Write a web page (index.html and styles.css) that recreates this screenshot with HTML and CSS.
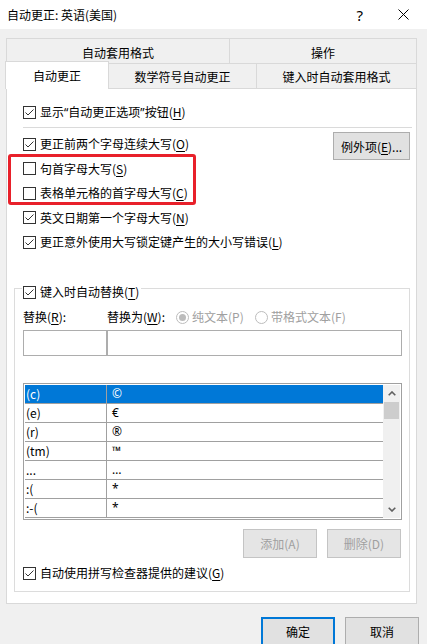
FILE: index.html
```html
<!DOCTYPE html>
<html lang="zh-CN">
  <head>
    <meta charset="UTF-8" />
    <title>自动更正: 英语(美国)</title>
    <link rel="stylesheet" href="styles.css">
  </head>
  <body>
    <svg class="defs" width="0" height="0">
      <symbol id="cb-on" viewBox="0 0 13 13">
        <rect x="0.5" y="0.5" width="12" height="12" fill="#fff" stroke="#333" />
        <polyline points="2.5,6.5 5,9 10.5,3.5" fill="none" stroke="#333" stroke-width="1" />
      </symbol>
      <symbol id="cb-off" viewBox="0 0 13 13">
        <rect x="0.5" y="0.5" width="12" height="12" fill="#fff" stroke="#333" />
      </symbol>
      <symbol id="rb-on" viewBox="0 0 13 13">
        <circle cx="6.5" cy="6.5" r="6" fill="#fff" stroke="#bcbcbc" />
        <circle cx="6.5" cy="6.5" r="3.5" fill="#bcbcbc" />
      </symbol>
      <symbol id="rb-off" viewBox="0 0 13 13">
        <circle cx="6.5" cy="6.5" r="6" fill="#fff" stroke="#bcbcbc" />
      </symbol>
    </svg>

    <div class="dialog">
      <div class="titlebar">
        <div class="title">自动更正: 英语(美国)</div>
        <span class="help">?</span>
        <svg class="close" viewBox="0 0 11 11">
          <path d="M0.5 0.5 L10.5 10.5 M10.5 0.5 L0.5 10.5" stroke="#000" stroke-width="1" />
        </svg>
      </div>

      <div class="tabs">
        <div class="tab-row top">
          <div class="tab t-format">自动套用格式</div>
          <div class="tab t-action">操作</div>
        </div>
        <div class="tab-row">
          <div class="tab active">自动更正</div>
          <div class="tab t-math">数学符号自动更正</div>
          <div class="tab t-type">键入时自动套用格式</div>
        </div>
      </div>

      <div class="panel">
        <div class="opt first">
          <svg class="cb"><use href="#cb-on" /></svg>
          <span>显示<span class="q">“</span>自动更正选项<span class="q">”</span>按钮(<u>H</u>)</span>
        </div>
        <div class="sep"></div>
        <div class="opt gap">
          <svg class="cb"><use href="#cb-on" /></svg>
          <span>更正前两个字母连续大写(<u>O</u>)</span>
          <button class="btn exc">例外项(<u>E</u>)...</button>
        </div>
        <div class="opt">
          <svg class="cb"><use href="#cb-off" /></svg>
          <span>句首字母大写(<u>S</u>)</span>
        </div>
        <div class="opt">
          <svg class="cb"><use href="#cb-off" /></svg>
          <span>表格单元格的首字母大写(<u>C</u>)</span>
        </div>
        <div class="opt">
          <svg class="cb"><use href="#cb-on" /></svg>
          <span>英文日期第一个字母大写(<u>N</u>)</span>
        </div>
        <div class="opt">
          <svg class="cb"><use href="#cb-on" /></svg>
          <span>更正意外使用大写锁定键产生的大小写错误(<u>L</u>)</span>
        </div>

        <div class="group">
          <div class="legend">
            <svg class="cb"><use href="#cb-on" /></svg>
            <span>键入时自动替换(<u>T</u>)</span>
          </div>
          <div class="labels">
            <span class="lbl-from">替换(<u>R</u>):</span>
            <span class="lbl-to">替换为(<u>W</u>):</span>
            <span class="radio first">
              <svg class="rb"><use href="#rb-on" /></svg>纯文本(P)
            </span>
            <span class="radio">
              <svg class="rb"><use href="#rb-off" /></svg>带格式文本(F)
            </span>
          </div>
          <div class="inputs">
            <div class="input in-from"></div>
            <div class="input in-to"></div>
          </div>

          <div class="list">
            <div class="rows">
              <div class="row sel"><span class="k">(c)</span><span class="v">©</span></div>
              <div class="row"><span class="k">(e)</span><span class="v">€</span></div>
              <div class="row"><span class="k">(r)</span><span class="v">®</span></div>
              <div class="row"><span class="k">(tm)</span><span class="v">™</span></div>
              <div class="row"><span class="k">...</span><span class="v">…</span></div>
              <div class="row"><span class="k">:(</span><span class="v">*</span></div>
              <div class="row"><span class="k">:-(</span><span class="v">*</span></div>
            </div>
            <div class="scroll">
              <div class="arrow">
                <svg width="8" height="5" viewBox="0 0 8 5">
                  <polyline points="0.7,4.3 4,1 7.3,4.3" fill="none" stroke="#606060" stroke-width="1.6" />
                </svg>
              </div>
              <div class="thumb"></div>
              <div class="track"></div>
              <div class="arrow">
                <svg width="8" height="5" viewBox="0 0 8 5">
                  <polyline points="0.7,0.7 4,4 7.3,0.7" fill="none" stroke="#606060" stroke-width="1.6" />
                </svg>
              </div>
            </div>
          </div>

          <div class="actions">
            <button class="btn disabled">添加(A)</button>
            <button class="btn disabled">删除(D)</button>
          </div>

          <div class="opt last">
            <svg class="cb"><use href="#cb-on" /></svg>
            <span>自动使用拼写检查器提供的建议(<u>G</u>)</span>
          </div>
        </div>
      </div>

      <div class="footer">
        <button class="btn default">确定</button>
        <button class="btn">取消</button>
      </div>

      <!-- red annotation box -->
      <div class="mark"></div>
    </div>
  </body>
</html>
```

FILE: styles.css
```css
body {
  margin: 0;
  font-family: "Noto Sans CJK SC", "Noto Sans", sans-serif;
  font-size: 12px;
  color: #000;
  background-color: #f0f0f0;
}
.defs {
  position: absolute;
}
.dialog {
  position: relative;
  width: 427px;
  height: 644px;
  overflow: hidden;
}
u {
  text-underline-offset: 2px;
}

.titlebar {
  height: 29px;
  background: #fff;
  display: flex;
  align-items: center;
  padding-left: 7px;
}
.title {
  flex: 1;
  line-height: 16px;
}
.help {
  font-family: "Noto Sans", sans-serif;
  font-size: 15px;
  line-height: 16px;
  margin-right: 35px;
}
.close {
  width: 11px;
  height: 11px;
  margin-right: 18px;
}

.tabs {
  padding: 9px 0 0 6px;
}
.tab-row {
  display: flex;
  align-items: flex-start;
  height: 25px;
}
.tab {
  box-sizing: border-box;
  height: 25px;
  display: flex;
  align-items: center;
  justify-content: center;
  padding-top: 1px;
  background: #f0f0f0;
  border-top: 1px solid #d9d9d9;
  border-right: 1px solid #d9d9d9;
}
.tab:first-child {
  border-left: 1px solid #d9d9d9;
}
.tab-row.top .tab {
  padding-top: 3px;
}
.t-format {
  width: 224px;
}
.t-action {
  width: 187px;
}
.tab.active {
  position: relative;
  z-index: 1;
  width: 104px;
  height: 28px;
  margin: -2px 0 0 -1px;
  padding-top: 0;
  background: #fff;
}
.t-math {
  width: 148px;
}
.t-type {
  width: 160px;
}

.panel {
  box-sizing: border-box;
  width: 411px;
  margin-left: 6px;
  background: #fff;
  border: 1px solid #d9d9d9;
  padding: 11px 4px 11px 16px;
}
.opt {
  display: flex;
  align-items: center;
  height: 24.5px;
  line-height: 16px;
}
.opt.first {
  height: 24px;
}
.opt.gap {
  margin-top: 4px;
}
.cb {
  width: 13px;
  height: 13px;
  margin-right: 4px;
  flex-shrink: 0;
}
.q {
  font-family: "Noto Sans", sans-serif;
}
.sep {
  height: 1px;
  margin-top: 3px;
  background: #dadada;
}

.btn {
  box-sizing: border-box;
  width: 74px;
  height: 29px;
  padding: 0;
  font-family: inherit;
  font-size: 12px;
  color: #000;
  background: #e1e1e1;
  border: 1px solid #adadad;
}
.btn.exc {
  align-self: flex-start;
  width: 77px;
  height: 28px;
  margin: 0 2px 0 auto;
}
.btn.disabled {
  color: #a0a0a0;
  background: #e5e5e5;
  border-color: #c4c4c4;
}
.btn.default {
  border: 2px solid #0078d7;
}

.group {
  margin: 33.5px 2px 0 -9px;
  border: 1px solid #dcdcdc;
  padding: 0 7px 10px 8px;
}
.legend {
  display: flex;
  align-items: center;
  width: fit-content;
  height: 16px;
  line-height: 16px;
  margin: -5px 0 0 -1px;
  padding: 0 2px 0 1px;
  background: #fff;
}
.labels {
  display: flex;
  align-items: center;
  height: 16px;
  line-height: 16px;
  margin-top: 9px;
}
.lbl-from {
  width: 84px;
}
.lbl-to {
  width: 69px;
}
.radio {
  display: flex;
  align-items: center;
  color: #a0a0a0;
}
.radio.first {
  width: 79px;
}
.rb {
  width: 13px;
  height: 13px;
  margin-right: 3px;
}

.inputs {
  display: flex;
  height: 26px;
  margin-top: 5px;
}
.input {
  box-sizing: border-box;
  height: 26px;
  border: 1px solid #adadad;
}
.in-from {
  width: 84px;
}
.in-to {
  flex: 1;
}

.list {
  box-sizing: border-box;
  display: flex;
  height: 137px;
  margin-top: 27px;
  padding: 1px;
  border: 1px solid #a0a0a0;
}
.rows {
  flex: 1;
}
.row {
  display: flex;
  height: 18px;
  line-height: 18px;
  border-bottom: 1px solid #a0a0a0;
}
.row.sel {
  background: #0078d7;
  color: #fff;
}
.row .k {
  width: 80px;
  padding-left: 1px;
  border-right: 1px solid #a0a0a0;
}
.row .v {
  padding-left: 5px;
  font-family: "Noto Sans", "DejaVu Sans", sans-serif;
}
.scroll {
  width: 17px;
  display: flex;
  flex-direction: column;
  background: #f0f0f0;
}
.arrow {
  height: 17px;
  display: flex;
  align-items: center;
  justify-content: center;
}
.thumb {
  height: 17px;
  margin: 0 1px;
  background: #cdcdcd;
}
.track {
  flex: 1;
}

.actions {
  display: flex;
  justify-content: flex-end;
  gap: 10px;
  margin: 9px 1px 0 0;
}
.opt.last {
  height: 16px;
  margin-top: 7px;
}

.footer {
  display: flex;
  justify-content: flex-end;
  gap: 10px;
  margin-top: 13px;
  padding-right: 8px;
}

.mark {
  position: absolute;
  left: 8px;
  top: 154px;
  box-sizing: border-box;
  width: 188px;
  height: 51px;
  border: 3px solid #e8202a;
  border-radius: 3px;
}
```
